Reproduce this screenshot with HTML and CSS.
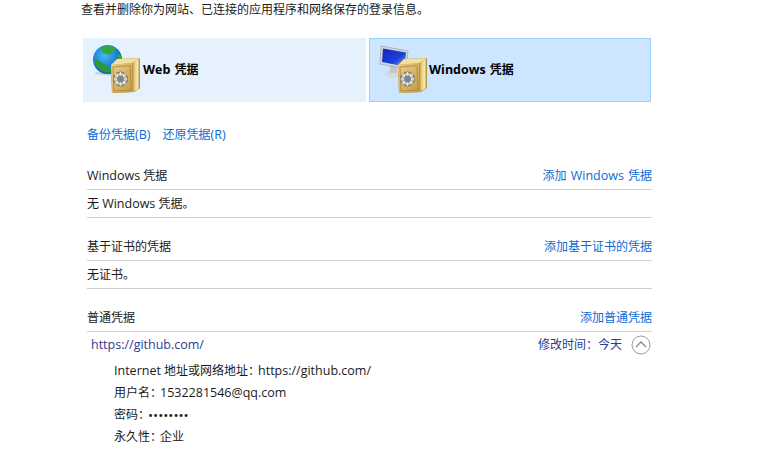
FILE: index.html
```html
<!DOCTYPE html>
<html lang="zh-CN">
<head>
<meta charset="utf-8">
<title>凭据管理器</title>
<link rel="stylesheet" href="styles.css">
</head>
<body>
<svg class="defs" width="0" height="0" aria-hidden="true">
  <defs>
    <linearGradient id="gold" x1="0" y1="0" x2="1" y2="1"><stop offset="0" stop-color="#ecd088"/><stop offset="1" stop-color="#c49a42"/></linearGradient>
    <linearGradient id="side" x1="0" y1="0" x2="1" y2="0"><stop offset="0" stop-color="#b08a3a"/><stop offset="0.35" stop-color="#e9cf86"/><stop offset="0.7" stop-color="#f6e7ae"/><stop offset="1" stop-color="#a88232"/></linearGradient>
    <radialGradient id="sea" cx="0.4" cy="0.35" r="0.75"><stop offset="0" stop-color="#45bdf2"/><stop offset="0.6" stop-color="#1a78d8"/><stop offset="1" stop-color="#0c3fa5"/></radialGradient>
    <linearGradient id="screen" x1="0" y1="0" x2="1" y2="1"><stop offset="0" stop-color="#1426b8"/><stop offset="0.6" stop-color="#1a40d8"/><stop offset="1" stop-color="#8aa6f2"/></linearGradient>
    <symbol id="safe" viewBox="0 0 29 35">
      <path d="M0 7 L6 1 L29 0 L29 30 L23 34 L1 35 Z" fill="#9c7a30"/>
      <path d="M0 7 L21 5 L22 34 L1 35 Z" fill="url(#gold)"/>
      <path d="M21 5 L29 0 L29 30 L22 34 Z" fill="url(#side)"/>
      <path d="M0 7 L6 1 L29 0 L21 5 Z" fill="#f3dfa0"/>
      <path d="M2 9 L19 7.5 L20 32 L3 33 Z" fill="none" stroke="#a98838" stroke-width="0.8"/>
      <circle cx="9.5" cy="21" r="7" fill="#bfc0ba" stroke="#6e6c62" stroke-width="1"/>
      <circle cx="9.5" cy="21" r="3.4" fill="#85847e"/>
      <path d="M9.5 14 V17.4 M9.5 24.6 V28 M2.5 21 H6 M13 21 H16.5 M4.5 16 L7 18.5 M12 23.5 L14.5 26 M14.5 16 L12 18.5 M7 23.5 L4.5 26" stroke="#ecece8" stroke-width="1.2"/>
    </symbol>
  </defs>
</svg>
<main class="page">
  <p class="intro">查看并删除你为网站、已连接的应用程序和网络保存的登录信息。</p>

  <div class="tiles">
    <div class="tile">
      <svg class="tile-icon" width="50" height="50" viewBox="0 0 50 50" aria-hidden="true">
        <ellipse cx="17" cy="28" rx="15" ry="2.5" fill="#8fa8bd" opacity="0.4"/>
        <circle cx="14.5" cy="14.5" r="14.5" fill="url(#sea)"/>
        <path d="M9 2 C13 0.5 19 0.5 23 3.5 C22 6 19 6.5 18 9 C15 10.5 12 8.5 10 8 C8.5 6 7.5 4 9 2 Z" fill="#34a838"/>
        <path d="M1 14 C5 14 9 18 12 20 C15 22 19 23 20 26 C16 29 10 28 6 24 C3 21 1.5 18 1 14 Z" fill="#2b9a36"/>
        <path d="M25 9 C27.5 9 29 12 29 15 L26.5 16.5 C25 14.5 24 11 25 9 Z" fill="#34a838"/>
        <use href="#safe" x="18" y="13" width="29" height="35"/>
      </svg>
      <span class="tile-label"><span class="latin">Web</span> 凭据</span>
    </div>
    <div class="tile tile-active">
      <svg class="tile-icon" width="50" height="50" viewBox="0 0 50 50" aria-hidden="true">
        <ellipse cx="14" cy="29" rx="8.5" ry="3.5" fill="#d5d9dc"/>
        <path d="M11 20 H18 V28 H11 Z" fill="#c2c6c9"/>
        <path d="M2 1 L29 6 L27 24 L1 19 Z" fill="#d3d8dd" stroke="#9ba2a8" stroke-width="0.7"/>
        <path d="M4 3.5 L27 7.5 L25.5 21.5 L3 17 Z" fill="url(#screen)"/>
        <use href="#safe" x="19" y="13" width="29" height="35"/>
      </svg>
      <span class="tile-label"><span class="latin">Windows</span> 凭据</span>
    </div>
  </div>

  <div class="backup">
    <a class="link">备份凭据<span class="latin">(B)</span></a>
    <a class="link">还原凭据<span class="latin">(R)</span></a>
  </div>

  <section class="group">
    <header class="group-head"><h2 class="group-title"><span class="latin">Windows</span> 凭据</h2><a class="link">添加 <span class="latin">Windows</span> 凭据</a></header>
    <div class="empty">无 <span class="latin">Windows</span> 凭据。</div>
  </section>

  <section class="group">
    <header class="group-head"><h2 class="group-title">基于证书的凭据</h2><a class="link">添加基于证书的凭据</a></header>
    <div class="empty">无证书。</div>
  </section>

  <section class="group">
    <header class="group-head"><h2 class="group-title">普通凭据</h2><a class="link">添加普通凭据</a></header>
    <div class="entry-head">
      <span class="entry-name latin">https://github.com/</span>
      <span class="entry-meta"><span>修改时间：今天</span>
        <svg class="chevron" width="20" height="20" viewBox="0 0 20 20" aria-hidden="true">
          <circle cx="10" cy="10" r="9" fill="none" stroke="#9a9a9a" stroke-width="1"/>
          <path d="M5 12 L10 7 L15 12" fill="none" stroke="#8a8a8a" stroke-width="1.3"/>
        </svg>
      </span>
    </div>
    <dl class="details">
      <div class="detail"><dt><span class="latin">Internet</span> 地址或网络地址：</dt><dd class="latin">https://github.com/</dd></div>
      <div class="detail"><dt>用户名：</dt><dd class="latin">1532281546@qq.com</dd></div>
      <div class="detail"><dt>密码：</dt><dd class="dots">••••••••</dd></div>
      <div class="detail"><dt>永久性：</dt><dd>企业</dd></div>
    </dl>
  </section>
</main>
</body>
</html>
```

FILE: styles.css
```css
* { box-sizing: border-box; }
html, body { margin: 0; padding: 0; background: #fff; }
body {
  width: 766px;
  height: 452px;
  overflow: hidden;
  font-family: "Open Sans", "Noto Sans CJK SC", sans-serif;
  font-size: 12px;
  line-height: 16px;
  color: #1a1a1a;
}
.latin { font-size: 12.5px; }
.defs { position: absolute; }
.page { width: 652px; margin-left: 83px; }
.intro { margin: 0 0 0 -2px; height: 38px; padding-top: 2px; }
.tiles { display: flex; gap: 3px; height: 64px; }
.tile {
  width: 283px;
  display: flex;
  align-items: center;
  padding-left: 10px;
  background: #e5f2fe;
  color: #000;
}
.tile-active {
  width: 282px;
  padding-left: 9px;
  background: #cbe6fe;
  border: 1px solid #99d1f7;
}
.tile-icon { flex: none; }
.tile-label { font-weight: 700; word-spacing: 1px; }
.backup { display: flex; gap: 12px; padding: 25px 0 0 4px; height: 62px; }
.link { color: #0a6cd6; word-spacing: 1px; }
.group { margin-left: 4px; width: 565px; }
.group-head {
  display: flex;
  justify-content: space-between;
  align-items: flex-end;
  height: 26px;
  padding-bottom: 5px;
  border-bottom: 1px solid #cfcfcf;
}
.group-title { margin: 0; font-size: 12px; font-weight: 400; }
.empty {
  height: 28px;
  padding-top: 6px;
  border-bottom: 1px solid #cfcfcf;
  margin-bottom: 17px;
}
.entry-head {
  display: flex;
  justify-content: space-between;
  align-items: center;
  height: 26px;
  padding-left: 4px;
}
.entry-name, .entry-meta { color: #2f3a8f; }
.entry-meta { display: flex; align-items: center; gap: 9px; margin-right: 1px; }
.details { margin: 2px 0 0 27px; }
.detail { display: flex; height: 22px; align-items: center; }
.detail dt { font-weight: 400; margin-right: -2px; }
.detail dd { margin: 0; }
.dots { font-size: 13.5px; }
```
